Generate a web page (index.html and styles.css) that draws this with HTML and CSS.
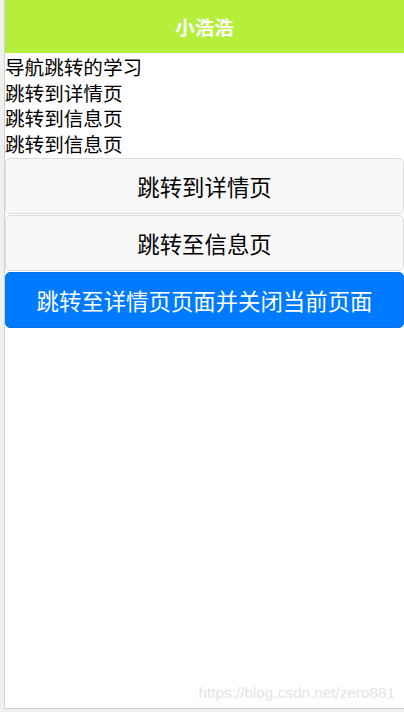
FILE: index.html
```html
<!DOCTYPE html>
<html lang="zh-CN">
<head>
<meta charset="utf-8">
<title>小浩浩</title>
<link rel="stylesheet" href="styles.css">
</head>
<body>
<div class="frame">
  <header class="navbar">小浩浩</header>
  <main class="content">
    <div class="lines">
      <div class="line">导航跳转的学习</div>
      <div class="line">跳转到详情页</div>
      <div class="line">跳转到信息页</div>
      <div class="line">跳转到信息页</div>
    </div>
    <div class="buttons">
      <button class="btn">跳转到详情页</button>
      <button class="btn">跳转至信息页</button>
      <button class="btn btn-primary">跳转至详情页页面并关闭当前页面</button>
    </div>
  </main>
  <div class="watermark">https://blog.csdn.net/zero881</div>
</div>
</body>
</html>
```
FILE: styles.css
```css
html, body {
  margin: 0;
  padding: 0;
}
body {
  background: #f0f0f0;
  width: 404px;
  height: 712px;
  padding-left: 4px;
  box-sizing: border-box;
  font-family: "Noto Sans CJK SC", "Noto Sans", sans-serif;
  overflow: hidden;
}
.frame {
  position: relative;
  width: 400px;
  height: 709px;
  box-sizing: border-box;
  background: #ffffff;
  border-left: 1px solid #d2d2d2;
  border-bottom: 1px solid #d2d2d2;
  display: flex;
  flex-direction: column;
}
.navbar {
  height: 53px;
  flex: none;
  background: #b5ef3b;
  color: #ffffff;
  font-weight: bold;
  font-size: 19.5px;
  line-height: 53px;
  text-align: center;
}
.content {
  display: flex;
  flex-direction: column;
}
.lines {
  padding-top: 1px;
  color: #000000;
  font-size: 19.6px;
  line-height: 25.5px;
}
.buttons {
  margin-top: 2px;
  display: flex;
  flex-direction: column;
  gap: 1px;
}
.btn {
  display: block;
  width: 399px;
  height: 56px;
  margin: 0;
  padding: 0;
  box-sizing: border-box;
  border: 1px solid #dcdcdc;
  border-radius: 5px;
  background: #f8f8f8;
  color: #000000;
  font-family: "Noto Sans CJK SC", "Noto Sans", sans-serif;
  font-size: 22.4px;
  line-height: 54px;
  text-align: center;
}
.btn-primary {
  background: #007aff;
  border-color: #0a72e6;
  color: #ffffff;
}
.watermark {
  position: absolute;
  right: 9px;
  bottom: 6px;
  font-family: "Liberation Sans", Arial, sans-serif;
  font-size: 15.3px;
  color: #e4e4e4;
}
```
